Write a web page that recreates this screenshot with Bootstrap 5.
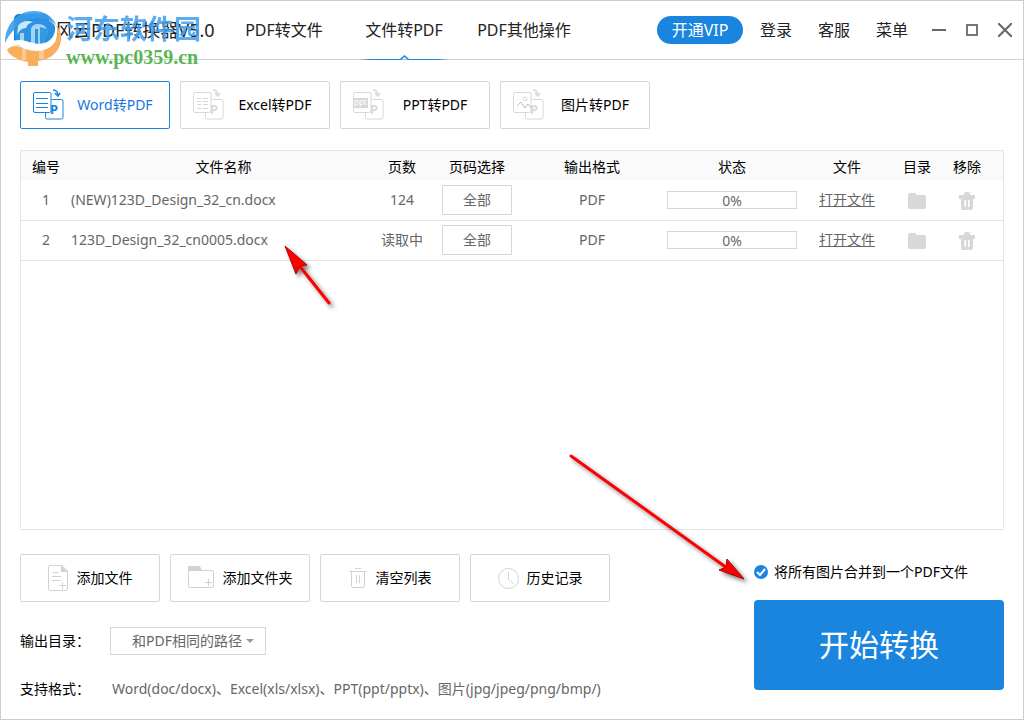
<!DOCTYPE html>
<html lang="zh-CN">
<head>
<meta charset="utf-8">
<meta name="viewport" content="width=device-width, initial-scale=1">
<title>风云PDF转换器V5.0</title>
<link href="https://cdn.jsdelivr.net/npm/bootstrap@5.3.0/dist/css/bootstrap.min.css" rel="stylesheet">
<style>
:root { --brand: #1a85de; --line: #d6d6d6; --soft: #e5e5e5; --dim: #666; }
body { font-family: "Noto Sans", "Noto Sans CJK SC", sans-serif; font-size: 14px; line-height: 20px; color: #000; background: #fff; }
button, select { font: inherit; color: inherit; }
.window-frame { border: 1px solid #ccc; }
.top-bar { height: 59px; border-bottom: 1px solid #d2d2d2; font-size: 16px; color: #222; padding-right: 2px; }
.brand-area { width: 223px; padding-left: 54px; }
.brand-title { font-size: 18px; font-weight: 400; line-height: 24px; }
.tab-link { width: 120px; height: 58px; color: #222; }
.tab-link.active::after { content: ""; position: absolute; left: 15px; right: 15px; bottom: -1px; height: 1px; background: linear-gradient(90deg, transparent, var(--brand) 12%, var(--brand) 88%, transparent); }
.tab-link svg { bottom: -1px; left: 56px; z-index: 1; }
.plain { border: 0; background: none; padding: 0; }
.vip { width: 86px; height: 28px; border: 0; background: var(--brand); color: #fff; margin-right: 4px; }
.top-link { width: 58px; color: #222; }
.win-btn { width: 33px; height: 32px; }
.win-group { padding-left: 1px; }
.mark-text { left: 65px; top: 10px; }
.mark-name { font-size: 27px; line-height: 36px; font-weight: 700; color: #3f9fee; opacity: .85; }
.mark-site { font-family: "Liberation Serif", serif; font-weight: 700; font-size: 20px; line-height: 20px; color: #59b653; }
main { padding: 21px 19px 20px; }
.mode-list { gap: 10px; padding-bottom: 21px; }
.mode-btn { width: 150px; height: 48px; border: 1px solid var(--line); border-radius: 2px; background: #fff; padding: 0 4px 0 12px; }
.mode-btn svg { color: #d8d8d8; }
.mode-btn.active { border-color: var(--brand); color: #1a75de; }
.mode-btn.active svg { color: var(--brand); }
.file-panel { border: 1px solid var(--soft); min-height: 200px; }
.file-table { table-layout: fixed; }
.file-table th { height: 29px; padding: 2px 0 0; font-weight: 400; background: #fafafa; text-align: center; }
.file-table td { height: 40px; padding: 0; border-bottom: 1px solid var(--soft); color: var(--dim); text-align: center; vertical-align: middle; }
.file-table td:nth-child(2) { text-align: left; }
.file-table th:last-child, .file-table td:last-child { padding-right: 15px; }
.file-table a { color: var(--dim); }
.page-btn { width: 70px; height: 30px; border: 1px solid var(--line); background: #fff; }
.state-bar { width: 130px; height: 18px; border: 1px solid var(--line); border-radius: 0; background: #fff; font-size: 14px; }
.state-text { line-height: 18px; color: var(--dim); }
.tool-list { gap: 10px; padding-bottom: 25px; }
.tool-btn { width: 140px; height: 48px; border: 1px solid var(--line); border-radius: 2px; background: #fff; }
.path-row { padding-bottom: 24px; }
.label-col { width: 90px; }
.format-list { color: var(--dim); padding-left: 2px; }
.path-select { width: 156px; height: 28px; border: 1px solid var(--line); border-radius: 0; color: var(--dim); padding: 0 16px 0 21px; appearance: none;
  background: #fff url("data:image/svg+xml,%3Csvg xmlns='http://www.w3.org/2000/svg' width='8' height='4'%3E%3Cpath d='M0 0h8L4 4z' fill='%23999'/%3E%3C/svg%3E") no-repeat right 11px center; }
.merge-row { gap: 6px; padding: 8px 0 18px; }
.merge-check { width: 14px; height: 14px; margin: 0; appearance: none; border-radius: 50%; background: #ddd; }
.merge-check:checked { background: var(--brand) url("data:image/svg+xml,%3Csvg xmlns='http://www.w3.org/2000/svg' width='14' height='14'%3E%3Cpath d='M3 7l3 3 5-6' fill='none' stroke='%23fff' stroke-width='2'/%3E%3C/svg%3E") center; }
.start-btn { width: 250px; height: 90px; border: 0; border-radius: 4px; background: var(--brand); color: #fff; font-size: 30px; line-height: 40px; }
.guide { pointer-events: none; filter: drop-shadow(3px 3px 2px rgba(0,0,0,.5)); z-index: 5; overflow: visible; }
.guide-name { left: 283px; top: 244px; }
.guide-merge { left: 567px; top: 453px; }
</style>
</head>
<body>
<svg class="d-none">
  <symbol id="sheets" viewBox="0 0 32 34">
    <g fill="none" stroke="currentColor">
      <path d="M18.500 11.500H28.500a1.500 1.500 0 0 1 1.500 1.500V29.500a1.500 1.500 0 0 1-1.500 1.500H14a1.500 1.500 0 0 1-1.500-1.500V25M2 4.500h14.500a1.500 1.500 0 0 1 1.500 1.500v17a1.500 1.500 0 0 1-1.500 1.500H2A1.500 1.500 0 0 1 .5 23V6A1.500 1.500 0 0 1 2 4.500z"/>
      <path d="M20 2c3 0 5 2 5 6" stroke-width="1.500"/><path d="M22 5l3 3 2-3" stroke-width="1.500"/>
    </g>
    <text x="17" y="26" font-family="Noto Sans" font-size="13" font-weight="700" fill="currentColor">P</text>
  </symbol>
  <symbol id="folder" viewBox="0 0 18 16"><path d="M0 2a2 2 0 0 1 2-2h5l2 2h7a2 2 0 0 1 2 2v10a2 2 0 0 1-2 2H2a2 2 0 0 1-2-2z" fill="#d8d8d8"/></symbol>
  <symbol id="trash" viewBox="0 0 16 18"><path fill="#d8d8d8" fill-rule="evenodd" d="M5 3V1.500Q5 0 6.500 0h3Q11 0 11 1.500V3h5v4h-2v9q0 2-2 2H4q-2 0-2-2V7H0V3zM5.500 8v7h1.500V8zm3.500 0v7h1.500V8z"/></symbol>
</svg>

<div class="window-frame position-relative d-flex flex-column min-vh-100">
  <header class="top-bar d-flex align-items-center">
    <div class="brand-area"><h1 class="brand-title text-nowrap m-0">风云PDF转换器V5.0</h1></div>
    <nav class="d-flex">
      <a class="tab-link d-flex align-items-center justify-content-center text-decoration-none" href="#">PDF转文件</a>
      <a class="tab-link active position-relative d-flex align-items-center justify-content-center text-decoration-none" href="#" aria-current="page">文件转PDF
        <svg class="position-absolute" width="9" height="5" viewBox="0 0 9 5"><path d="M.5 4.500L4.500 1l4 3.500" fill="#fff" stroke="#1a85de" stroke-width="1.500"/></svg></a>
      <a class="tab-link d-flex align-items-center justify-content-center text-decoration-none" href="#">PDF其他操作</a>
    </nav>
    <div class="d-flex align-items-center ms-auto">
      <button class="vip rounded-pill p-0" type="button">开通VIP</button>
      <a class="top-link text-center text-decoration-none" href="#">登录</a>
      <a class="top-link text-center text-decoration-none" href="#">客服</a>
      <a class="top-link text-center text-decoration-none" href="#">菜单</a>
      <div class="win-group d-flex">
        <button class="win-btn plain d-flex align-items-center justify-content-center" type="button" aria-label="最小化"><svg width="14" height="14"><path d="M0 7h14" stroke="#666" stroke-width="2"/></svg></button>
        <button class="win-btn plain d-flex align-items-center justify-content-center" type="button" aria-label="最大化"><svg width="12" height="12"><path d="M1 1h10v10H1z" fill="none" stroke="#77747e" stroke-width="2"/></svg></button>
        <button class="win-btn plain d-flex align-items-center justify-content-center" type="button" aria-label="关闭"><svg width="14" height="14"><path d="M0 0l14 14M14 0L0 14" stroke="#666" stroke-width="2"/></svg></button>
      </div>
    </div>
  </header>

  <svg class="position-absolute top-0 start-0" width="66" height="70" viewBox="1 1 66 70" aria-hidden="true">
    <rect x="14" y="14" width="35" height="32" rx="5" fill="#0a80d8"/>
    <path d="M5 43C5 24 18 11 34 11c11 0 19 6 22 14-3-3-8-6-14-6-13-1-22 4-28 11-5 5-7 9-9 13z" fill="#3c9ce8" opacity=".9"/>
    <path d="M14 30c5-7 14-11 26-11 6 0 12 2 15 7v14l-12 5H16z" fill="#2b93e2"/>
    <path d="M18 26c3-5 10-6 15-4-4 1-6 3-7 6-4 0-7 3-9 7z" fill="#e8f4fd" opacity=".85"/>
    <path d="M20 33h4v12h-4zM31 29c1-5 7-6 12-4 4 2 5 6 4 10l-3 10h-6V29h-3v16h-4z" fill="#d7edfb" opacity=".7"/>
    <path d="M40 27l7 2v12l-7 3z" fill="#168bdd" opacity=".8"/>
    <path d="M5 51c1-8 6-11 14-11 8 0 17 6 26 3 7-3 11-9 10-17 3 6 3 12-1 17-8 10-21 8-31 4-8-3-14-2-18 4z" fill="#fff"/>
    <path d="M7 50c5-6 12-4 18-1 12 4 24 2 30-7 3-5 3-11 1-17 4 4 6 10 5 16-2 11-11 19-23 20v5H28v-4C18 60 10 56 7 50z" fill="#f9ae5b"/>
    <path d="M22 48h4v12h-4zM39 49h5v10h-5z" fill="#fff" opacity=".35"/>
  </svg>
  <div class="mark-text position-absolute text-nowrap">
    <div class="mark-name">河东软件园</div>
    <div class="mark-site">www.pc0359.cn</div>
  </div>

  <main class="d-flex flex-column flex-grow-1">
    <div class="d-flex flex-wrap mode-list">
      <button class="mode-btn active d-flex align-items-center" type="button"><svg width="32" height="34"><use href="#sheets"/><path d="M3 10.500h12M3 15.500h12M3 19.500h12" stroke="currentColor"/></svg><span class="flex-grow-1">Word转PDF</span></button>
      <button class="mode-btn d-flex align-items-center" type="button"><svg width="32" height="34"><use href="#sheets"/><path d="M4 10.500h4m2 0h5M4 13.500h4m2 0h5M4 16.500h4m2 0h5M4 20.500h4m2 0h5" stroke="currentColor"/></svg><span class="flex-grow-1">Excel转PDF</span></button>
      <button class="mode-btn d-flex align-items-center" type="button"><svg width="32" height="34"><use href="#sheets"/><path d="M1 10h14v10H1z" fill="currentColor"/><text x="1" y="17" font-family="Noto Sans" font-size="8" fill="#fff">ppt</text></svg><span class="flex-grow-1">PPT转PDF</span></button>
      <button class="mode-btn d-flex align-items-center" type="button"><svg width="32" height="34"><use href="#sheets"/><path d="M4 18l4-4 4 6 3-4 3 4" fill="none" stroke="#bbb"/><circle cx="12" cy="11" r="2" fill="none" stroke="currentColor"/></svg><span class="flex-grow-1">图片转PDF</span></button>
    </div>

    <section class="file-panel flex-grow-1">
      <table class="file-table w-100">
        <colgroup><col style="width:50px"><col><col style="width:52px"><col style="width:98px"><col style="width:132px"><col style="width:148px"><col style="width:82px"><col style="width:58px"><col style="width:57px"></colgroup>
        <thead><tr><th>编号</th><th>文件名称</th><th>页数</th><th>页码选择</th><th>输出格式</th><th>状态</th><th>文件</th><th>目录</th><th>移除</th></tr></thead>
        <tbody>
          <tr><td>1</td><td>(NEW)123D_Design_32_cn.docx</td><td>124</td><td><button class="page-btn p-0" type="button">全部</button></td><td>PDF</td>
            <td><div class="state-bar progress mx-auto justify-content-center" role="progressbar" aria-valuenow="0" aria-valuemin="0" aria-valuemax="100"><span class="state-text">0%</span></div></td>
            <td><a href="#">打开文件</a></td><td><button class="plain align-middle" type="button" aria-label="打开目录"><svg class="d-block" width="18" height="16"><use href="#folder"/></svg></button></td><td><button class="plain align-middle" type="button" aria-label="移除"><svg class="d-block" width="16" height="18"><use href="#trash"/></svg></button></td></tr>
          <tr><td>2</td><td>123D_Design_32_cn0005.docx</td><td class="text-nowrap">读取中</td><td><button class="page-btn p-0" type="button">全部</button></td><td>PDF</td>
            <td><div class="state-bar progress mx-auto justify-content-center" role="progressbar" aria-valuenow="0" aria-valuemin="0" aria-valuemax="100"><span class="state-text">0%</span></div></td>
            <td><a href="#">打开文件</a></td><td><button class="plain align-middle" type="button" aria-label="打开目录"><svg class="d-block" width="18" height="16"><use href="#folder"/></svg></button></td><td><button class="plain align-middle" type="button" aria-label="移除"><svg class="d-block" width="16" height="18"><use href="#trash"/></svg></button></td></tr>
        </tbody>
      </table>
    </section>

    <footer class="d-flex justify-content-between pt-4">
      <div>
        <div class="d-flex tool-list">
          <button class="tool-btn d-flex align-items-center justify-content-center gap-2" type="button"><svg width="21" height="27" fill="none" stroke="#d2d2d2"><path d="M14 .5H2A1.500 1.500 0 0 0 .5 2v22A1.500 1.500 0 0 0 2 25.500h16a1.500 1.500 0 0 0 1.500-1.500V6zM4 7.500h7M4 11.500h9M4 15.500h9M11 20.500h7M14.500 17v7"/><path d="M13 0v7h7z" fill="#d2d2d2" stroke="none"/></svg>添加文件</button>
          <button class="tool-btn d-flex align-items-center justify-content-center gap-2" type="button"><svg width="27" height="24" fill="none" stroke="#d2d2d2"><path d="M.5 1v19A1.500 1.500 0 0 0 2 21.500h22a1.500 1.500 0 0 0 1.500-1.500V6A1.500 1.500 0 0 0 24 4.500H.5M17 16.500h7M20.500 13v7"/><path d="M0 0h12l2 5H0z" fill="#d2d2d2" stroke="none"/></svg>添加文件夹</button>
          <button class="tool-btn d-flex align-items-center justify-content-center gap-2" type="button"><svg width="19" height="22" fill="none" stroke="#d2d2d2"><path d="M6 1.500h6M0 4.500h18M2.500 5v14a1.500 1.500 0 0 0 1.500 1.500h10a1.500 1.500 0 0 0 1.500-1.500V5M7.500 8v8M10.500 8v8"/></svg>清空列表</button>
          <button class="tool-btn d-flex align-items-center justify-content-center gap-2" type="button"><svg width="21" height="21" fill="none" stroke="#d2d2d2"><circle cx="10.500" cy="10.500" r="10"/><path d="M10.500 4v7l5 5"/></svg>历史记录</button>
        </div>
        <div class="d-flex align-items-center path-row">
          <label class="label-col" for="outPath">输出目录：</label>
          <select class="path-select" id="outPath"><option>和PDF相同的路径</option></select>
        </div>
        <div class="d-flex align-items-center">
          <span class="label-col">支持格式：</span>
          <span class="format-list">Word(doc/docx)、Excel(xls/xlsx)、PPT(ppt/pptx)、图片(jpg/jpeg/png/bmp/)</span>
        </div>
      </div>
      <div>
        <div class="d-flex align-items-center merge-row"><input class="merge-check" type="checkbox" id="merge" checked><label for="merge">将所有图片合并到一个PDF文件</label></div>
        <button class="start-btn d-block" type="button">开始转换</button>
      </div>
    </footer>
  </main>

  <svg class="guide guide-name position-absolute" width="48" height="62" aria-hidden="true"><path d="M45 58L14 19" stroke="red" stroke-width="3" stroke-linecap="round"/><path d="M1 1l22 19-7 1-4 8z" fill="red" stroke="#a00"/></svg>
  <svg class="guide guide-merge position-absolute" width="178" height="130" aria-hidden="true"><path d="M3 2l156 112" stroke="red" stroke-width="3" stroke-linecap="round"/><path d="M176 125l-25-9 7-3 1-8z" fill="red" stroke="#a00"/></svg>
</div>
<script src="https://cdn.jsdelivr.net/npm/bootstrap@5.3.0/dist/js/bootstrap.bundle.min.js"></script>
</body>
</html>
